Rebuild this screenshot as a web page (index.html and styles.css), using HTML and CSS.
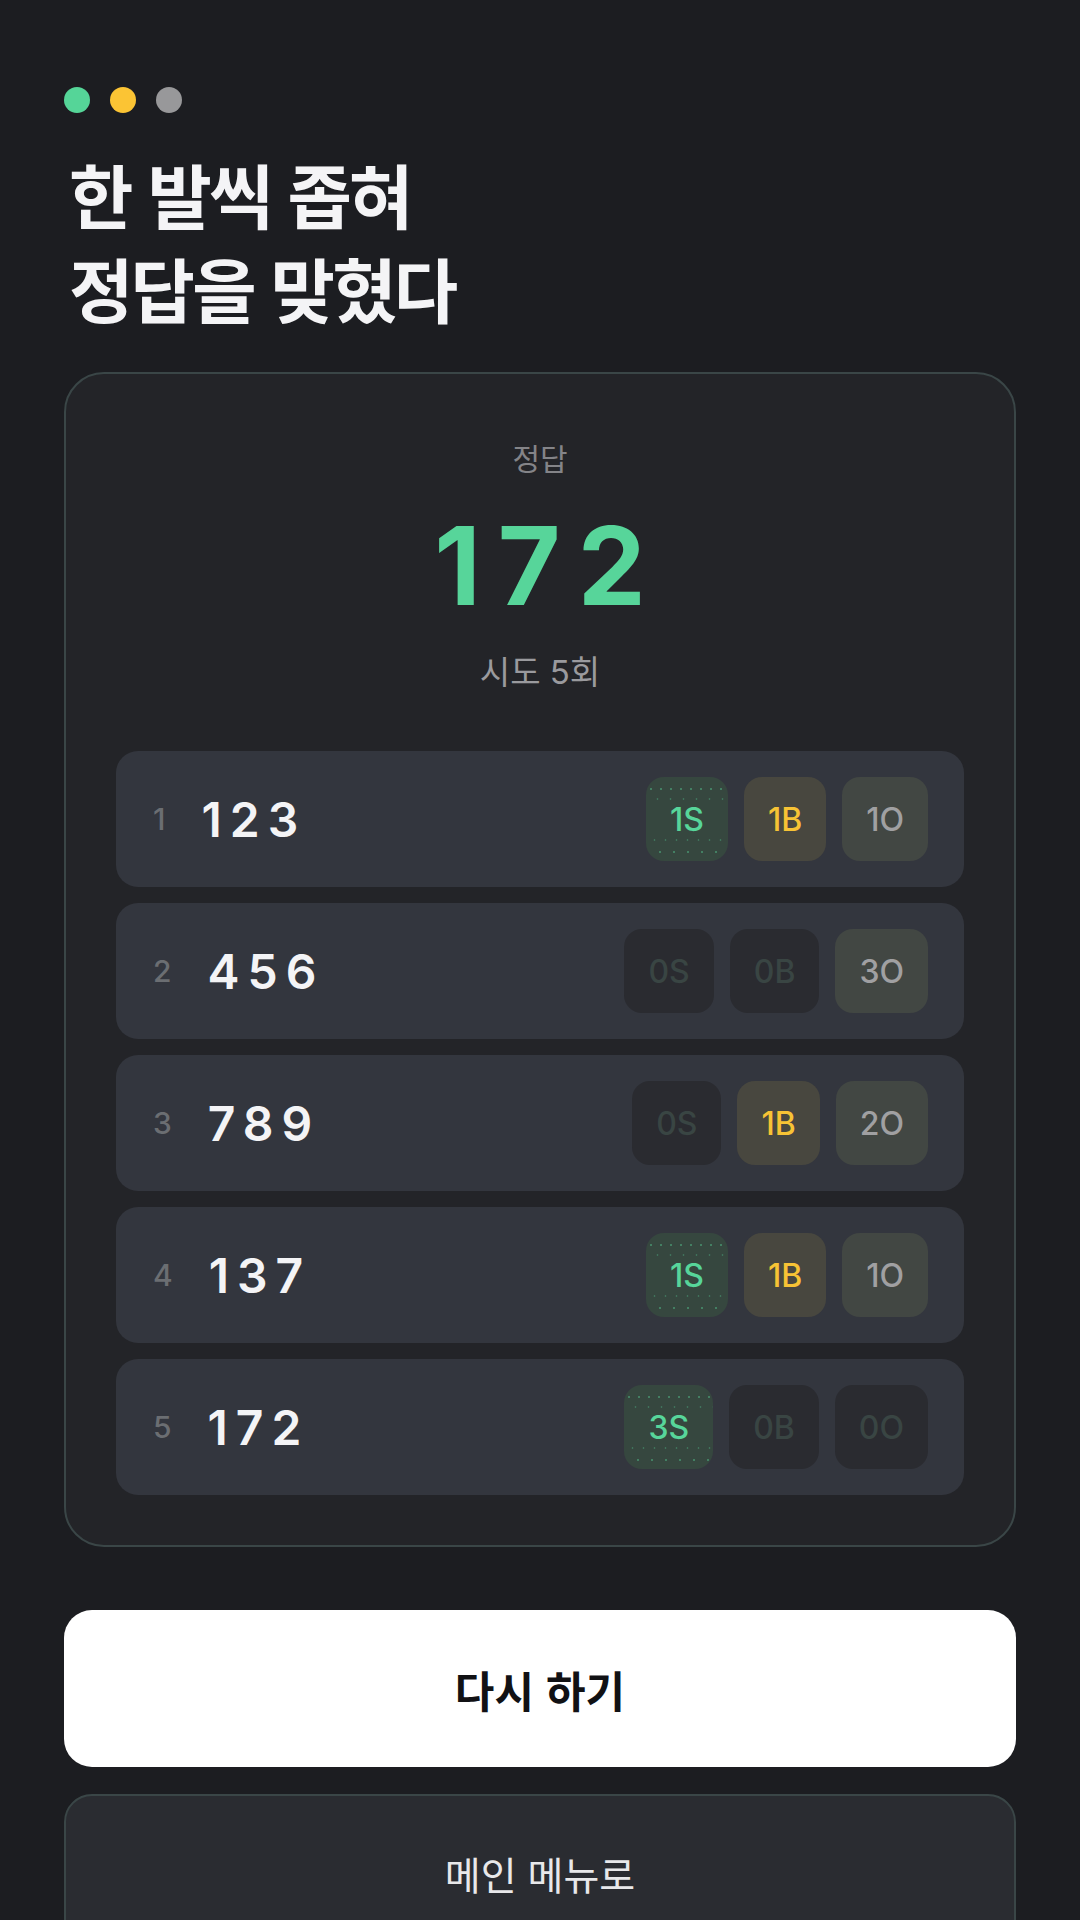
FILE: index.html
```html
<!DOCTYPE html>
<html lang="ko">
<head>
    <meta charset="UTF-8">
    <meta name="viewport" content="width=device-width, initial-scale=1.0">
    <title>숫자 야구 - 결과</title>
    <link rel="stylesheet" href="styles.css">
</head>
<body>

    <div class="screen">
        <div class="dots">
            <span class="dot dot-green"></span>
            <span class="dot dot-yellow"></span>
            <span class="dot dot-gray"></span>
        </div>

        <h1 class="title">한 발씩 좁혀<br>정답을 맞혔다</h1>

        <div class="result-card">
            <div class="answer-label">정답</div>
            <div class="answer">172</div>
            <div class="attempts">시도 5회</div>

            <div class="history">
                <div class="row">
                    <span class="row-index">1</span>
                    <span class="row-guess">123</span>
                    <div class="badges">
                        <span class="badge strike">1S</span>
                        <span class="badge ball">1B</span>
                        <span class="badge out">1O</span>
                    </div>
                </div>
                <div class="row">
                    <span class="row-index">2</span>
                    <span class="row-guess">456</span>
                    <div class="badges">
                        <span class="badge off">0S</span>
                        <span class="badge off">0B</span>
                        <span class="badge out">3O</span>
                    </div>
                </div>
                <div class="row">
                    <span class="row-index">3</span>
                    <span class="row-guess">789</span>
                    <div class="badges">
                        <span class="badge off">0S</span>
                        <span class="badge ball">1B</span>
                        <span class="badge out">2O</span>
                    </div>
                </div>
                <div class="row">
                    <span class="row-index">4</span>
                    <span class="row-guess">137</span>
                    <div class="badges">
                        <span class="badge strike">1S</span>
                        <span class="badge ball">1B</span>
                        <span class="badge out">1O</span>
                    </div>
                </div>
                <div class="row">
                    <span class="row-index">5</span>
                    <span class="row-guess">172</span>
                    <div class="badges">
                        <span class="badge strike">3S</span>
                        <span class="badge off">0B</span>
                        <span class="badge off">0O</span>
                    </div>
                </div>
            </div>
        </div>

        <div class="actions">
            <button class="btn btn-primary">다시 하기</button>
            <button class="btn btn-secondary">메인 메뉴로</button>
        </div>
    </div>

</body>
</html>
```

FILE: styles.css
```css
body {
    margin: 0;
    background-color: #1c1d21;
    font-family: Inter, "Noto Sans CJK KR", sans-serif;
    color: #f4f4f6;
    overflow: hidden;
}
.screen {
    width: 1080px;
    height: 1920px;
    box-sizing: border-box;
    padding: 87px 64px 0;
}
.dots {
    display: flex;
    gap: 20px;
}
.dot {
    width: 26px;
    height: 26px;
    border-radius: 50%;
}
.dot-green {
    background-color: #55d598;
}
.dot-yellow {
    background-color: #fbc434;
}
.dot-gray {
    background-color: #98989a;
}
.title {
    margin: 34px 0 0 5px;
    font-family: "Noto Sans CJK KR", sans-serif;
    font-size: 70px;
    font-weight: 700;
    line-height: 94px;
    letter-spacing: -0.04em;
    color: #f4f4f6;
}
.result-card {
    margin-top: 37px;
    padding: 65px 50px 50px;
    background-color: #232428;
    border: 2px solid #3a4647;
    border-radius: 40px;
    text-align: center;
}
.answer-label {
    font-size: 30px;
    line-height: 40px;
    color: #848488;
}
.answer {
    margin-top: 27px;
    padding-left: 17px;
    font-size: 108px;
    font-weight: 700;
    line-height: 120px;
    letter-spacing: 17px;
    color: #57d59a;
}
.attempts {
    margin-top: 26px;
    font-size: 33px;
    line-height: 40px;
    color: #9a9a9e;
}
.history {
    margin-top: 59px;
    display: flex;
    flex-direction: column;
    gap: 16px;
}
.row {
    display: flex;
    align-items: center;
    height: 136px;
    padding: 0 36px 0 37px;
    background-color: #33363e;
    border-radius: 22px;
}
.row-index {
    font-size: 30px;
    font-weight: 500;
    color: #6b6e72;
}
.row-guess {
    margin-left: 36px;
    font-size: 48px;
    font-weight: 600;
    letter-spacing: 8px;
    color: #f4f4f6;
}
.badges {
    margin-left: auto;
    display: flex;
    gap: 16px;
}
.badge {
    display: flex;
    align-items: center;
    justify-content: center;
    height: 84px;
    padding: 0 24px;
    border-radius: 18px;
    font-size: 32px;
    font-weight: 500;
}
.badge.strike {
    background-color: #36473f;
    color: #57d59a;
    background-image:
        radial-gradient(circle, rgba(87, 213, 154, 0.4) 0.7px, transparent 1.2px),
        radial-gradient(circle, rgba(87, 213, 154, 0.3) 0.7px, transparent 1.2px),
        radial-gradient(circle, rgba(87, 213, 154, 0.3) 0.7px, transparent 1.2px),
        radial-gradient(circle, rgba(87, 213, 154, 0.4) 0.7px, transparent 1.2px);
    background-size: 10px 6px, 13px 6px, 11px 6px, 14px 6px;
    background-repeat: repeat-x;
    background-position: 0 9px, 5px 19px, 3px 60px, 7px 72px;
}
.badge.ball {
    background-color: #48473f;
    color: #f7c335;
}
.badge.out {
    background-color: #424743;
    color: #a0a0a2;
}
.badge.off {
    background-color: #2a2b30;
    color: #394543;
}
.actions {
    margin-top: 63px;
    display: flex;
    flex-direction: column;
    gap: 27px;
}
.btn {
    height: 157px;
    border-radius: 28px;
    font-family: "Noto Sans CJK KR", sans-serif;
    cursor: pointer;
}
.btn-primary {
    background-color: #ffffff;
    border: none;
    color: #111114;
    font-size: 43px;
    font-weight: 700;
}
.btn-secondary {
    background-color: #2a2c31;
    border: 2px solid #3a4647;
    color: #e8e8ea;
    font-size: 39px;
    font-weight: 400;
}
```
